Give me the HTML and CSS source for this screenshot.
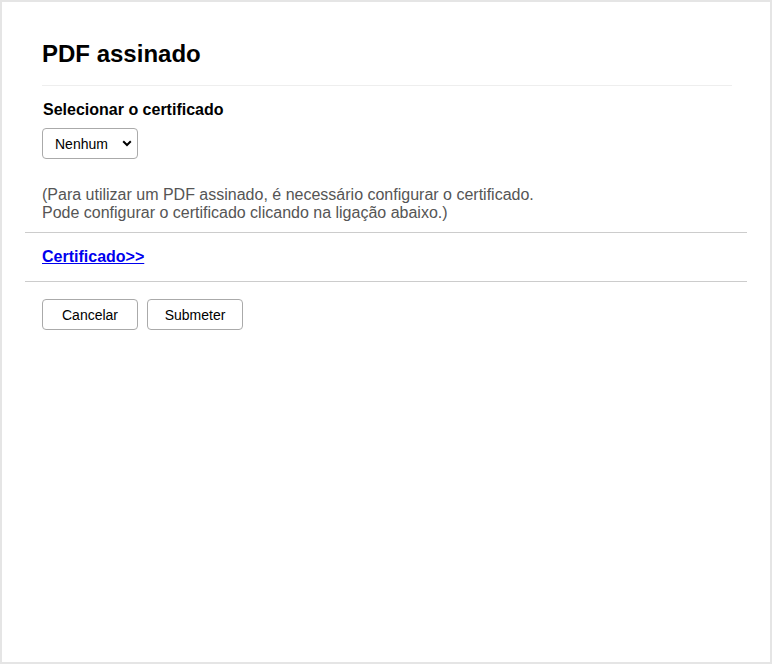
FILE: index.html
```html
<!DOCTYPE html>
<html lang="pt">
<head>
<meta charset="utf-8">
<title>PDF assinado</title>
<link rel="stylesheet" href="styles.css">
</head>
<body>
<div class="page">
  <div class="header">
    <h1 class="title">PDF assinado</h1>
  </div>
  <div class="section">
    <div class="label">Selecionar o certificado</div>
    <div class="select">
      <span class="select-text">Nenhum</span>
      <svg class="chev" width="10" height="7" viewBox="0 0 10 7"><path d="M1.2 1.3 L5 5 L8.8 1.3" fill="none" stroke="#000" stroke-width="2"/></svg>
    </div>
    <p class="note">(Para utilizar um PDF assinado, é necessário configurar o certificado.<br>Pode configurar o certificado clicando na ligação abaixo.)</p>
  </div>
  <div class="linkrow">
    <a class="link" href="#">Certificado&gt;&gt;</a>
  </div>
  <div class="actions">
    <button class="btn">Cancelar</button>
    <button class="btn">Submeter</button>
  </div>
</div>
</body>
</html>
```
FILE: styles.css
```css
html, body {
  margin: 0;
  padding: 0;
  background: #fff;
}
body {
  font-family: "Liberation Sans", Arial, sans-serif;
  color: #000;
}
.page {
  width: 772px;
  height: 664px;
  box-sizing: border-box;
  border: 2px solid #e5e5e5;
  padding: 0 23px;
}
.header {
  margin: 0 15px 0 17px;
  padding-top: 38px;
  padding-bottom: 17px;
  border-bottom: 1px solid #eeeeee;
}
.title {
  margin: 0;
  font-size: 24px;
  line-height: 28px;
  font-weight: bold;
}
.section {
  padding: 14px 17px 9px;
  border-bottom: 1px solid #cccccc;
}
.label {
  font-size: 16px;
  line-height: 20px;
  font-weight: bold;
  padding-left: 1px;
}
.select {
  margin-top: 8px;
  width: 96px;
  height: 31px;
  box-sizing: border-box;
  border: 1px solid #aaaaaa;
  border-radius: 4px;
  display: flex;
  align-items: center;
  justify-content: space-between;
  padding: 0 5px 0 12px;
  font-size: 14px;
}
.chev {
  display: block;
}
.note {
  margin: 27px 0 0;
  font-size: 16px;
  line-height: 18.4px;
  color: #555555;
}
.linkrow {
  padding: 15px 17px 15px;
  border-bottom: 1px solid #cccccc;
  line-height: 18.4px;
}
.link {
  font-size: 16px;
  font-weight: bold;
  color: #0000ee;
  text-decoration: underline;
}
.actions {
  padding: 17px 17px 0;
  display: flex;
  gap: 9px;
}
.btn {
  width: 96px;
  height: 31px;
  box-sizing: border-box;
  background: #fff;
  border: 1px solid #aaaaaa;
  border-radius: 4px;
  font-family: "Liberation Sans", Arial, sans-serif;
  font-size: 14px;
  color: #000;
  padding: 0;
}
```
